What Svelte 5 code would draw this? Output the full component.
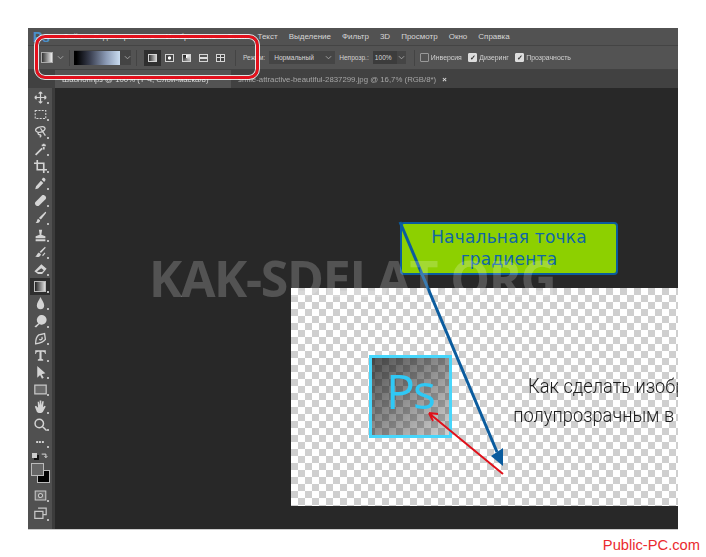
<script>
	const menu = ["Файл", "Редактирование", "Изображение", "Слои", "Текст", "Выделение", "Фильтр", "3D", "Просмотр", "Окно", "Справка"];

	// tool icons on a 16x16 grid, fill is used for solid parts and stroke for outlines
	const tools = [
		{ s: "M8 1.5v13M1.5 8h13M8 1 5.8 3.2M8 1l2.2 2.2M8 15l-2.2-2.2M8 15l2.2-2.2M1 8l2.2-2.2M1 8l2.2 2.2M15 8l-2.2-2.2M15 8l-2.2 2.2", w: 1.5 },
		{ s: "M1.5 3h13v10h-13z", dash: true, w: 1.3 },
		{ s: "M2 6c0-3 9-5 11-3s-2 6-6 6-5-2-5-3M6 9c-2 1-1 3 1 3s2 2 0 3M8 4l6 9", w: 1.6 },
		{ s: "M2 14.5 10 6.5M12 1v3M9.5 3h5M12 5v3", w: 2.2 },
		{ s: "M4 0v12h12M0 4h12v12", w: 2 },
		{ f: "M11 1c1.500-1 4 1.500 3 3l-1.500 2-3-3zM8.500 4.500l3 3-6.500 6.500-3.500 1 1-3.500z" },
		{ f: "M1.500 10 10 1.500c2.500-1.500 6 2 4.500 4.500L6 14.500c-2.500 1.500-6-2-4.500-4.500z" },
		{ f: "M14 1c1.200 0 1.200 1 .4 2L8.500 10.500 6 8.500zM5 9.500l2.500 2c0 2.500-2.500 4-5.500 3 2-1 1.500-4 3-5z" },
		{ f: "M6 1h4l-1 6 5 2v2.500H2V9l5-2zM2 12.500h12V15H2z" },
		{ f: "M13.500 1l1 1-6 6.500-1.500-1.500zM6 8l2.500 2c0 2.500-3.500 4.500-7 3 2-1 2.500-4 4.500-5zM13 8l1 1-3 3.500-1-1z" },
		{ f: "M9 1.500l6.500 5.500-5.500 6.500H5L.5 10zM4.500 11H10l2-2-3-2.500L4 10z" },
		{ grad: true },
		{ f: "M8 0c2 4.500 4.500 7 4.500 10.500a4.500 4.500 0 0 1-9 0C3.500 7 6 4.500 8 0z" },
		{ f: "M10 0a6 6 0 1 1-1 12 6 6 0 0 1 1-12zM5.500 10l1 1.500-4 4-2-1.500z" },
		{ s: "M2 14.500c0-6 1-9 4-11l7-1.500 1 7c-2 3-6 4.500-12 5.500zM6.500 9a2 2 0 1 0 3-3", w: 1.6 },
		{ f: "M1.500 1.500h13v4.500h-1c0-1.500-1-2.500-3-2.500H9.300v8.500l2 1v1.500H4.700V13l2-1V3.500H5.500c-2 0-3 1-3 2.500h-1z" },
		{ f: "M4 0l10 9-4.500 1 2.500 4.500-2.200 1.200-2.300-4.500L4 14.500z" },
		{ s: "M1 2.500h14v11H1z", w: 1.5, box: true },
		{ f: "M4.500 2h1.500l1 4.500V.5h2v6l1.200-5h1.800l-1 7.500 2-2 1.500 1-3.500 6.500c-1 2-6.500 2-7.500 0L1 8l1.500-1 2.500 2.500z" },
		{ s: "M6.500 1.500a5.200 5.200 0 1 1 0 10.400 5.200 5.200 0 0 1 0-10.400zM10.500 10.500l5 5", w: 1.8 },
		{ dots: true }
	];
	const toolsBottom = [
		{ s: "M1.500 2.500h13v11h-13zM5.500 8a2.500 2.500 0 1 0 5 0 2.500 2.500 0 0 0-5 0", box: true },
		{ s: "M5 1.500h10v8H11M1 5.500h10v8.500H1z", w: 1.5 }
	];
	const modes = ["linear", "radial", "angle", "reflect", "diamond"];
</script>

<div class="page">
	<div class="window">
		<div class="menu">
			<span class="logo">Ps</span>
			{#each menu as item}
				<span>{item}</span>
			{/each}
		</div>

		<div class="options">
			<div class="swatch"></div>
			<svg class="chev" viewBox="0 0 8 5"><path d="M1 1l3 3 3-3" /></svg>
			<i class="sep"></i>
			<div class="gradbar">
				<div class="gradfill"></div>
				<svg class="chev" viewBox="0 0 8 5"><path d="M1 1l3 3 3-3" /></svg>
			</div>
			<i class="sep"></i>
			<div class="modes">
				{#each modes as m, i}
					<div class="mode" class:active={i === 0}>
						<span class="mode-ico {m}"></span>
					</div>
				{/each}
			</div>
			<i class="sep"></i>
			<span class="lbl mode-lbl">Режим:</span>
			<div class="select">Нормальный<svg class="chev" viewBox="0 0 8 5"><path d="M1 1l3 3 3-3" /></svg></div>
			<span class="lbl">Непрозр.:</span>
			<div class="opacity"><span>100%</span><svg class="chev" viewBox="0 0 8 5"><path d="M1 1l3 3 3-3" /></svg></div>
			<i class="sep"></i>
			<span class="check"></span><span class="lbl">Инверсия</span>
			<span class="check on">✓</span><span class="lbl">Дизеринг</span>
			<span class="check on">✓</span><span class="lbl">Прозрачность</span>
		</div>

		<div class="tabs">
			<div class="tab active">Шаблонпрз @ 100% (Т Ч, Слой-маска/8)</div>
			<div class="tab">smile-attractive-beautiful-2837299.jpg @ 16,7% (RGB/8*)<b>×</b></div>
		</div>

		<div class="body">
			<div class="tools">
				{#each tools as t}
					<div class="tool" class:current={t.grad}>
						{#if t.grad}
							<span class="grad-ico"></span>
						{:else if t.dots}
							<span class="dots">•••</span>
						{:else}
							<svg viewBox="0 0 16 16">
								{#if t.box}<path d={t.s} fill="#6a6a6a" stroke="#c8c8c8" stroke-width={t.w ?? 1.4} />
								{:else if t.f}<path d={t.f} fill="#d4d4d4" />
								{:else}<path d={t.s} fill="none" stroke="#d4d4d4" stroke-width={t.w ?? 1.2} stroke-dasharray={t.dash ? "2.5 1.5" : null} />{/if}
							</svg>
						{/if}
					</div>
				{/each}
				<div class="colors-mini">
					<span class="mini-swap"></span>
					<svg viewBox="0 0 10 10"><path d="M1 3h6v5M5 6l2 2 2-2" /></svg>
				</div>
				<div class="colors"><span class="bg"></span><span class="fg"></span></div>
				{#each toolsBottom as t}
					<div class="tool low">
						<svg viewBox="0 0 16 16">
							<path d={t.s} fill={t.box ? "#6a6a6a" : "none"} stroke="#c8c8c8" stroke-width={t.w ?? 1.3} />
						</svg>
					</div>
				{/each}
			</div>
			<div class="gutter"></div>
			<div class="canvas">
				<div class="doc">
					<div class="psicon"><span>Ps</span></div>
					<div class="doctext">
						<div>Как сделать изображение</div>
						<div>полупрозрачным в Photoshop</div>
					</div>
				</div>
			</div>
		</div>
	</div>
	<div class="credit">Public-PC.com</div>

	<div class="callout">Начальная точка<br />градиента</div>
	<svg class="arrows" viewBox="0 0 706 557">
		<path d="M400 222 497 452" stroke="#0b5c9e" stroke-width="3" fill="none" />
		<path d="M503 466 491 456 503 448z" fill="#0b5c9e" />
		<path d="M503 474 430 414M429 413l9 1M429 413l4 8" stroke="#e0101a" stroke-width="2" fill="none" />
	</svg>
	<div class="watermark">KAK-SDELAT.ORG</div>
	<div class="highlight"></div>
</div>

<style>
	:global(body) {
		margin: 0;
		background: #fff;
	}
	.page {
		position: relative;
		width: 706px;
		height: 557px;
		padding: 28px 0 0 28px;
		box-sizing: border-box;
		overflow: hidden;
		font-family: "Liberation Sans", Arial, sans-serif;
	}
	.window {
		width: 650px;
		height: 501px;
		display: flex;
		flex-direction: column;
		background: #535353;
		color: #d6d6d6;
		filter: blur(0.35px);
		box-shadow: 0 1px 0 #ccc;
	}
	.menu {
		height: 18px;
		display: flex;
		align-items: center;
		gap: 11px;
		padding-left: 5px;
		font-size: 8px;
		background: #525252;
		border-bottom: 1px solid #444;
		box-sizing: border-box;
		flex: none;
	}
	.logo {
		width: 16px;
		margin-right: 3px;
		font-size: 14px;
		font-weight: bold;
		color: #4a8fc8;
	}
	.options {
		height: 24px;
		display: flex;
		align-items: center;
		padding-left: 13px;
		background: #535353;
		border-bottom: 1px solid #424242;
		box-sizing: border-box;
		flex: none;
	}
	.sep {
		width: 1px;
		height: 16px;
		background: #444;
		margin: 0 5px;
		flex: none;
	}
	.swatch {
		width: 12px;
		height: 11px;
		border: 1px solid #aaa;
		box-sizing: border-box;
		background: linear-gradient(90deg, #333, #eee);
	}
	.chev {
		width: 7px;
		height: 5px;
		margin-left: 4px;
		flex: none;
	}
	.chev path {
		fill: none;
		stroke: #aaa;
		stroke-width: 1;
	}
	.gradbar {
		display: flex;
		align-items: center;
		width: 57px;
		height: 15px;
		margin-left: -1px;
		background: #444;
		flex: none;
	}
	.gradfill {
		width: 48px;
		height: 14px;
		background: linear-gradient(90deg, #000 5%, #3a3f50 35%, #8b9ab5 70%, #c9dcf0);
	}
	.modes {
		display: flex;
		margin: 0 1px 0 2px;
	}
	.mode {
		width: 17px;
		height: 16px;
		display: flex;
		align-items: center;
		justify-content: center;
	}
	.mode.active {
		background: #2f2f2f;
	}
	.mode-ico {
		width: 9px;
		height: 8px;
		border: 1px solid #d4d4d4;
		box-sizing: border-box;
		background: #777;
	}
	.mode-ico.linear {
		background: linear-gradient(90deg, #333, #ccc);
	}
	.mode-ico.radial {
		background: radial-gradient(circle, #fff 25%, #444 45%);
	}
	.mode-ico.angle {
		background: conic-gradient(#fff, #111);
	}
	.mode-ico.reflect {
		background: linear-gradient(#555 40%, #ddd 40% 60%, #555 60%);
	}
	.mode-ico.diamond {
		background:
			linear-gradient(#ddd, #ddd) center / 1px 100% no-repeat,
			linear-gradient(#ddd, #ddd) center / 100% 1px no-repeat,
			#444;
	}
	.lbl {
		font-size: 6.6px;
		font-weight: 500;
		color: #d2d2d2;
		white-space: nowrap;
	}
	.check + .lbl {
		font-size: 6.9px;
	}
	.mode-lbl {
		margin-left: 2px;
	}
	.select {
		width: 66px;
		height: 13px;
		margin: 0 4px;
		padding-left: 5px;
		box-sizing: border-box;
		display: flex;
		align-items: center;
		justify-content: space-between;
		padding-right: 3px;
		background: #454545;
		font-size: 6.6px;
		flex: none;
	}
	.opacity {
		width: 33px;
		height: 13px;
		margin-left: 4px;
		margin-right: 3px;
		display: flex;
		align-items: center;
		background: #454545;
		font-size: 6.6px;
		flex: none;
	}
	.opacity span {
		width: 24px;
		padding-left: 2px;
		box-sizing: border-box;
		background: #3c3c3c;
		line-height: 13px;
	}
	.opacity .chev {
		margin-left: 1px;
	}
	.check {
		width: 7px;
		height: 7px;
		margin-right: 2px;
		border: 1px solid #999;
		border-radius: 1px;
		font-size: 7px;
		line-height: 7px;
		text-align: center;
		color: #333;
		flex: none;
	}
	.lbl + .check {
		margin-left: 6.5px;
	}
	.check.on {
		background: #ddd;
		border-color: #ddd;
		font-weight: bold;
	}
	.tabs {
		height: 18px;
		display: flex;
		padding-left: 27px;
		background: #414141;
		font-size: 7.8px;
		flex: none;
	}
	.tab {
		display: flex;
		align-items: center;
		padding: 0 7px;
		white-space: nowrap;
		color: #a6a6a6;
	}
	.tab.active {
		width: 176px;
		box-sizing: border-box;
		background: #535353;
		color: #d8d8d8;
	}
	.tab b {
		margin-left: 6px;
		color: #ddd;
	}
	.body {
		flex: 1;
		min-height: 0;
		display: flex;
	}
	.tools {
		width: 24px;
		padding-top: 1px;
		background: #505050;
		display: flex;
		flex-direction: column;
		align-items: center;
		flex: none;
	}
	.tool {
		position: relative;
		width: 20px;
		height: 17.2px;
		display: flex;
		align-items: center;
		justify-content: center;
		flex: none;
	}
	.tool::after {
		content: "";
		position: absolute;
		right: 1px;
		bottom: 2px;
		width: 2px;
		height: 2px;
		background: #bbb;
	}
	.tool svg {
		width: 13px;
		height: 13px;
	}
	.tool.current {
		background: #2e2e2e;
	}
	.tool.low {
		height: 18.5px;
	}
	.grad-ico {
		width: 12px;
		height: 11px;
		border: 1px solid #bbb;
		box-sizing: border-box;
		background: linear-gradient(90deg, #222, #ddd);
	}
	.dots {
		font-size: 8px;
		color: #ddd;
	}
	.colors-mini {
		width: 20px;
		height: 12px;
		display: flex;
		align-items: center;
		justify-content: space-between;
		padding: 0 2px;
		box-sizing: border-box;
		flex: none;
	}
	.colors-mini svg {
		width: 7px;
		height: 7px;
	}
	.colors-mini path {
		fill: none;
		stroke: #ddd;
		stroke-width: 1.4;
	}
	.mini-swap {
		width: 5px;
		height: 5px;
		background: #ccc;
		box-shadow: 2px 2px 0 #111;
	}
	.colors {
		position: relative;
		width: 20px;
		height: 21px;
		margin-top: 1px;
		margin-bottom: 2px;
		flex: none;
	}
	.fg,
	.bg {
		position: absolute;
		width: 11px;
		height: 11px;
		border: 1px solid #bbb;
	}
	.bg {
		left: 7px;
		top: 7px;
		background: #000;
	}
	.fg {
		left: 1px;
		top: 0;
		background: #666;
	}
	.gutter {
		width: 3px;
		background: #3c3c3c;
		flex: none;
	}
	.canvas {
		flex: 1;
		min-width: 0;
		background: #282828;
		padding: 200px 0 23px 236px;
		box-sizing: border-box;
	}
	.doc {
		height: 218px;
		padding: 67px 0 0 78px;
		box-sizing: border-box;
		display: flex;
		overflow: hidden;
		background: repeating-conic-gradient(#cfcfcf 0 25%, #fff 0 50%) 0 0 / 14px 14px;
	}
	.psicon {
		width: 83px;
		height: 83px;
		box-sizing: border-box;
		border: 3px solid #48d6fb;
		background: linear-gradient(135deg, rgba(0, 0, 0, 0.68), rgba(0, 0, 0, 0.18));
		flex: none;
	}
	.psicon span {
		display: block;
		padding-left: 14px;
		font-family: "Open Sans", sans-serif;
		font-weight: 500;
		font-size: 48px;
		letter-spacing: -2px;
		line-height: 66px;
		color: #2fc8f5;
	}
	.doctext {
		flex: none;
		width: 300px;
		margin-left: 76px;
		padding-top: 17px;
		font-family: Roboto, sans-serif;
		font-weight: 300;
		font-size: 21px;
		line-height: 29px;
		color: #1c1c1c;
		white-space: nowrap;
		transform: scaleX(0.87);
		transform-origin: left top;
	}
	.doctext div + div {
		margin-left: -17px;
	}
	.credit {
		width: 672px;
		margin-top: 8px;
		text-align: right;
		font-size: 14.7px;
		color: #ea2a30;
	}
	.callout {
		position: absolute;
		left: 400px;
		top: 222px;
		width: 218px;
		height: 53px;
		padding-top: 2px;
		box-sizing: border-box;
		border: 2px solid #0b5c9e;
		border-radius: 4px;
		background: #8dd000;
		text-align: center;
		font-family: "DejaVu Sans", sans-serif;
		font-size: 17px;
		line-height: 22px;
		letter-spacing: 0.2px;
		color: #0f66a8;
	}
	.arrows {
		position: absolute;
		left: 0;
		top: 0;
		width: 706px;
		height: 557px;
		pointer-events: none;
	}
	.watermark {
		position: absolute;
		left: 149px;
		top: 248px;
		font-family: "Open Sans", sans-serif;
		font-weight: 700;
		font-size: 50px;
		letter-spacing: -1.3px;
		line-height: 60px;
		white-space: nowrap;
		color: rgba(255, 255, 255, 0.2);
	}
	.highlight {
		position: absolute;
		left: 35px;
		top: 35px;
		width: 224px;
		height: 44px;
		box-sizing: border-box;
		border: 3px solid #e3101c;
		border-radius: 10px;
		outline: 1px solid rgba(255, 255, 255, 0.85);
		box-shadow: inset 0 0 0 1px rgba(255, 255, 255, 0.85);
	}
</style>
